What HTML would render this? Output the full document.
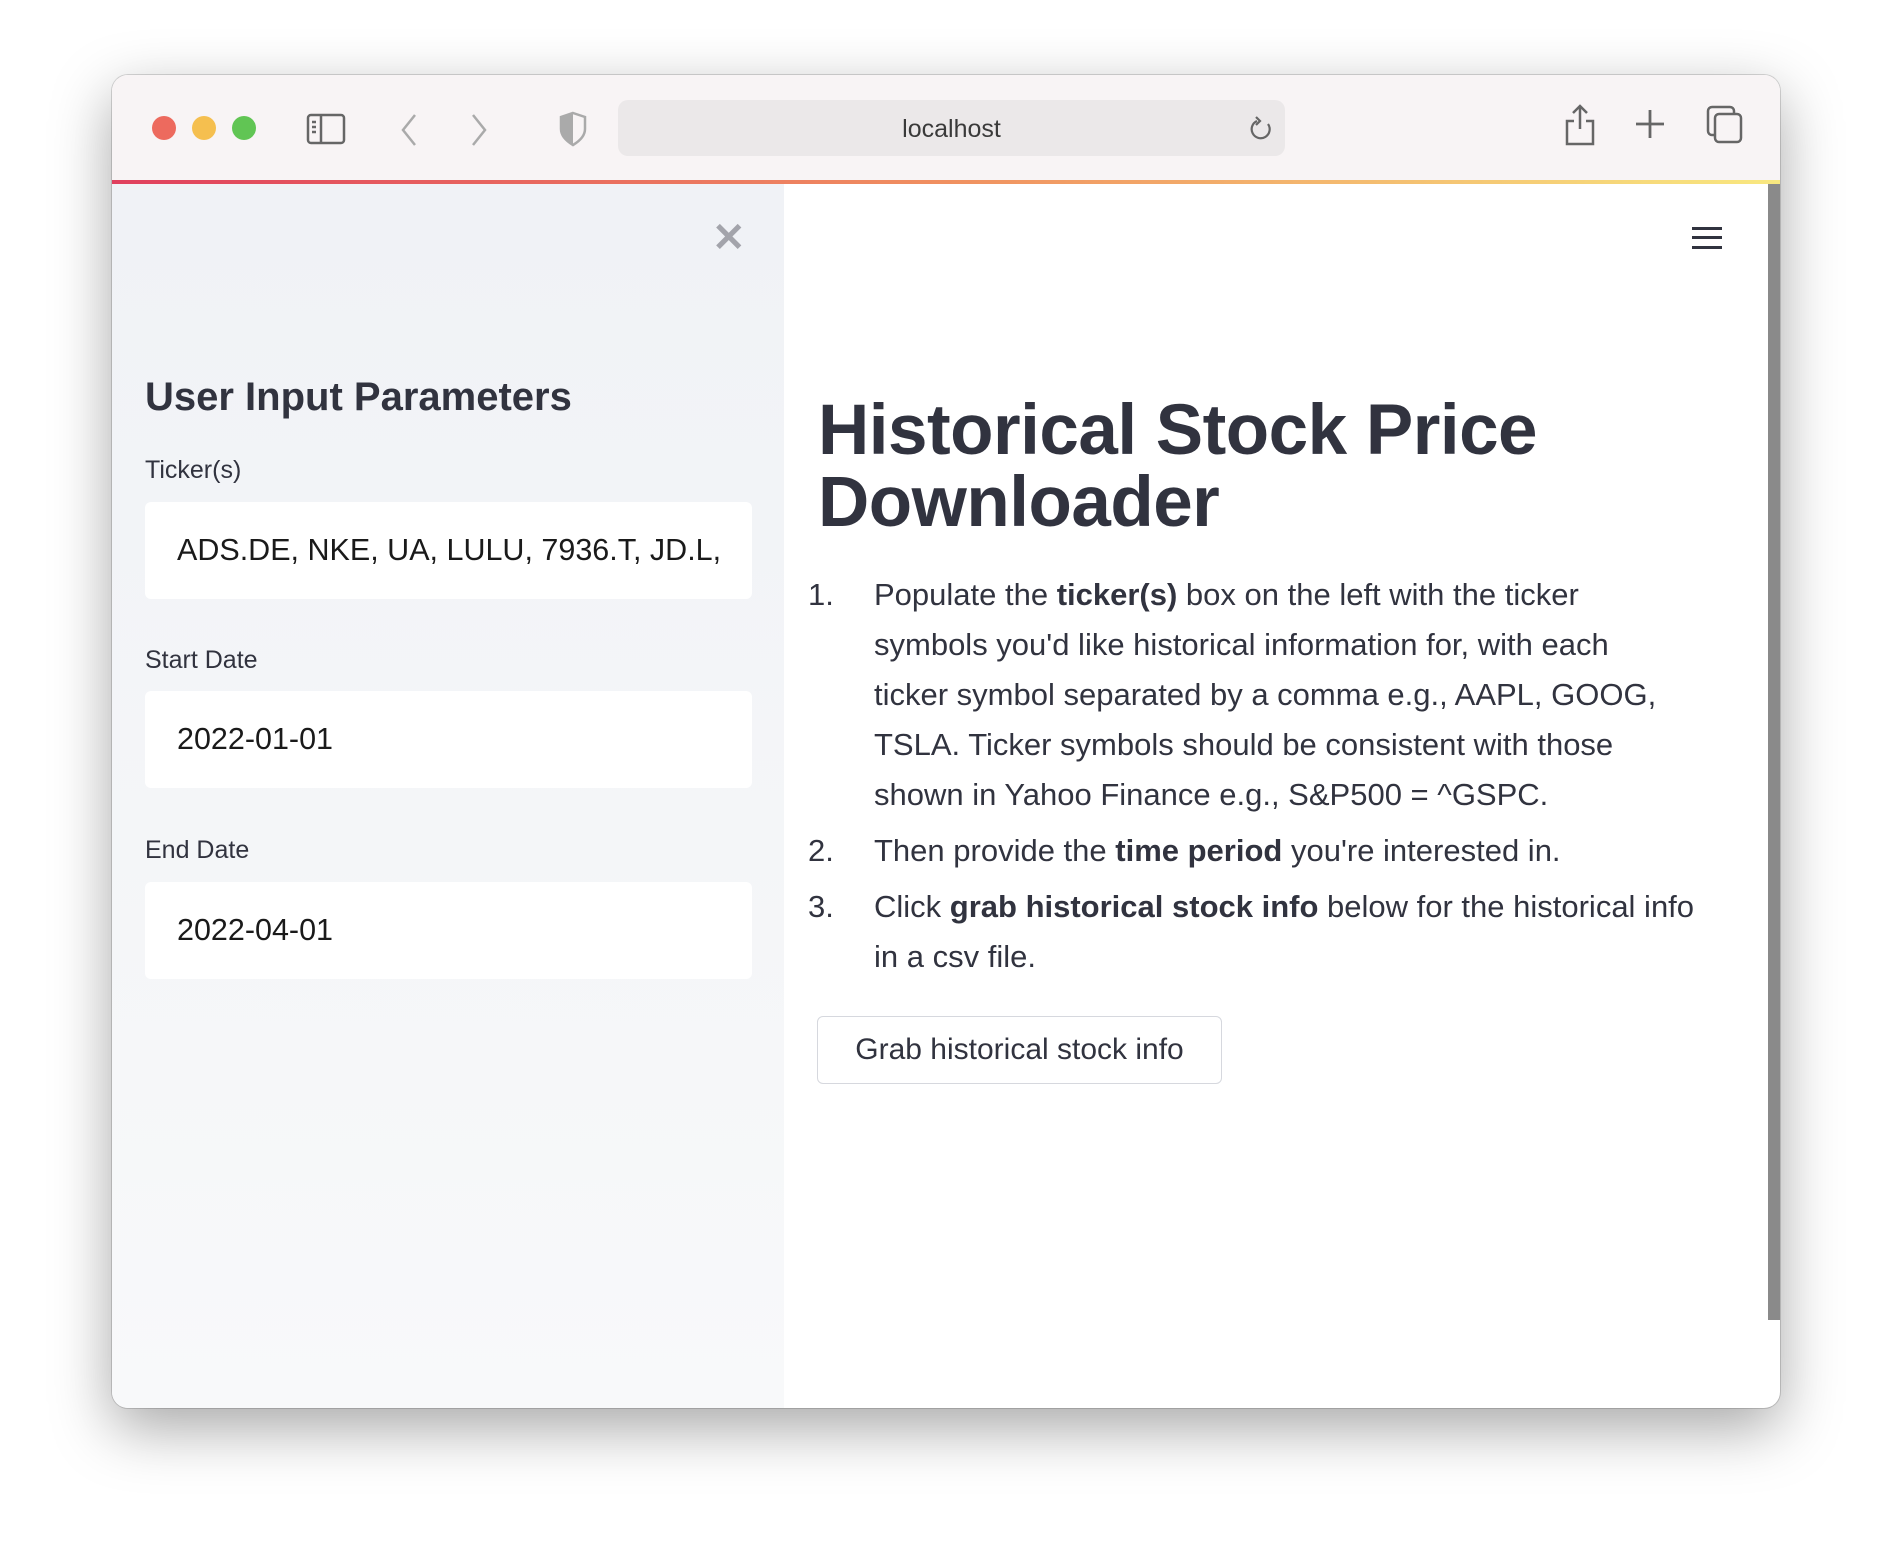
<!DOCTYPE html>
<html><head><meta charset="utf-8"><style>
body{margin:0;width:1892px;height:1558px;background:#fff;position:relative;overflow:hidden;font-family:"Liberation Sans",sans-serif;color:#31333f}
.win{position:absolute;left:112px;top:75px;width:1668px;height:1333px;border-radius:16px;overflow:hidden;background:#fff;box-shadow:0 20px 60px rgba(0,0,0,.35),0 0 0 1px rgba(0,0,0,.15)}
.tb{position:absolute;left:0;top:0;width:100%;height:106px;background:#f8f4f5}
.grad{position:absolute;left:0;top:105px;width:100%;height:4px;background:linear-gradient(90deg,#e0405e,#f09060 50%,#f8e880)}
.dot{position:absolute;top:41px;width:24px;height:24px;border-radius:50%}
.url{position:absolute;left:506px;top:25px;width:667px;height:56px;border-radius:10px;background:#ebe8e9;font-size:25px;color:#3a3a3a;text-align:center;line-height:58px}
.side{position:absolute;left:0;top:109px;width:672px;bottom:0;background:linear-gradient(#f0f2f6,#f8f9fa)}
.a{position:absolute;white-space:nowrap}
.inp{position:absolute;left:33px;width:607px;height:97px;background:#fff;border-radius:6px;font-size:30.5px;line-height:97px;padding-left:32px;box-sizing:border-box;color:#1a1a1a}
.lbl{position:absolute;left:33px;font-size:25px}
.li{position:absolute;font-size:31px;white-space:nowrap;line-height:50px}
.sb{position:absolute;right:0;top:109px;width:12px;height:1136px;background:#8a8a8a}
</style></head><body>
<div class="win">
<div class="tb">
 <div class="dot" style="left:40px;background:#ed6a5e"></div>
 <div class="dot" style="left:80px;background:#f5bf4f"></div>
 <div class="dot" style="left:120px;background:#61c554"></div>
 <svg class="a" style="left:194px;top:38px" width="40" height="32" viewBox="0 0 40 32" fill="none" stroke="#666" stroke-width="2.5"><rect x="2" y="2" width="36" height="28" rx="3"/><line x1="15" y1="2" x2="15" y2="30"/><line x1="6" y1="9" x2="10" y2="9"/><line x1="6" y1="14" x2="10" y2="14"/><line x1="6" y1="19" x2="10" y2="19"/></svg>
 <svg class="a" style="left:285px;top:38px" width="24" height="34" fill="none" stroke="#aaa" stroke-width="2.5"><path d="M18 2 L6 17 L18 32"/></svg>
 <svg class="a" style="left:355px;top:38px" width="24" height="34" fill="none" stroke="#aaa" stroke-width="2.5"><path d="M6 2 L18 17 L6 32"/></svg>
 <svg class="a" style="left:446px;top:36px" width="30" height="36"><path d="M15 2 L27 6 V18 C27 26 20 31 15 34 C10 31 3 26 3 18 V6 Z" fill="none" stroke="#aaa" stroke-width="2.5"/><path d="M15 2 L3 6 V18 C3 26 10 31 15 34 Z" fill="#aaa"/></svg>
 <div class="url">localhost</div>
 <svg class="a" style="left:1136px;top:41px" width="26" height="28" fill="none" stroke="#666" stroke-width="2.2"><path d="M20 8 A9 9 0 1 1 9 5"/><path d="M8 1 L12 5 L8 9"/></svg>
 <svg class="a" style="left:1451px;top:28px" width="34" height="44" fill="none" stroke="#666" stroke-width="2.5"><path d="M17 3 V26 M10 10 L17 3 L24 10 M11 18 H4 V41 H30 V18 H23"/></svg>
 <svg class="a" style="left:1521px;top:32px" width="34" height="34" stroke="#666" stroke-width="2.8"><path d="M17 3 V31 M3 17 H31"/></svg>
 <svg class="a" style="left:1594px;top:30px" width="38" height="40" fill="none" stroke="#666" stroke-width="2.5"><rect x="2" y="2" width="26" height="28" rx="4"/><rect x="9" y="9" width="26" height="28" rx="4" fill="#f8f4f5"/></svg>
</div>
<div class="grad"></div>
<div class="side">
 <div class="a" style="left:600px;top:31px;font-size:40px;color:#a3a4ab;font-weight:bold">✕</div>
 <div class="a" style="left:33px;top:191px;font-size:40px;font-weight:bold">User Input Parameters</div>
 <div class="lbl" style="top:272px">Ticker(s)</div>
 <div class="inp" style="top:318px">ADS.DE, NKE, UA, LULU, 7936.T, JD.L,</div>
 <div class="lbl" style="top:462px">Start Date</div>
 <div class="inp" style="top:507px">2022-01-01</div>
 <div class="lbl" style="top:652px">End Date</div>
 <div class="inp" style="top:698px">2022-04-01</div>
</div>
<svg class="a" style="left:1580px;top:150px" width="30" height="26" fill="#31333f"><rect x="0" y="2" width="30" height="3"/><rect x="0" y="11" width="30" height="3"/><rect x="0" y="21" width="30" height="3"/></svg>
<div class="a" style="left:706px;top:320px;font-size:71px;font-weight:bold;line-height:72px;letter-spacing:-0.5px">Historical Stock Price<br>Downloader</div>
<div class="li" style="left:696px;top:495px">1.</div>
<div class="li" style="left:762px;top:495px">Populate the <b>ticker(s)</b> box on the left with the ticker<br>symbols you'd like historical information for, with each<br>ticker symbol separated by a comma e.g., AAPL, GOOG,<br>TSLA. Ticker symbols should be consistent with those<br>shown in Yahoo Finance e.g., S&amp;P500 = ^GSPC.</div>
<div class="li" style="left:696px;top:751px">2.</div>
<div class="li" style="left:762px;top:751px">Then provide the <b>time period</b> you're interested in.</div>
<div class="li" style="left:696px;top:807px">3.</div>
<div class="li" style="left:762px;top:807px">Click <b>grab historical stock info</b> below for the historical info<br>in a csv file.</div>
<div class="a" style="left:705px;top:941px;width:405px;height:68px;border:1px solid #d6d8de;border-radius:6px;box-sizing:border-box;font-size:30px;line-height:66px;text-align:center">Grab historical stock info</div>
<div class="sb"></div>
</div>
</body></html>
